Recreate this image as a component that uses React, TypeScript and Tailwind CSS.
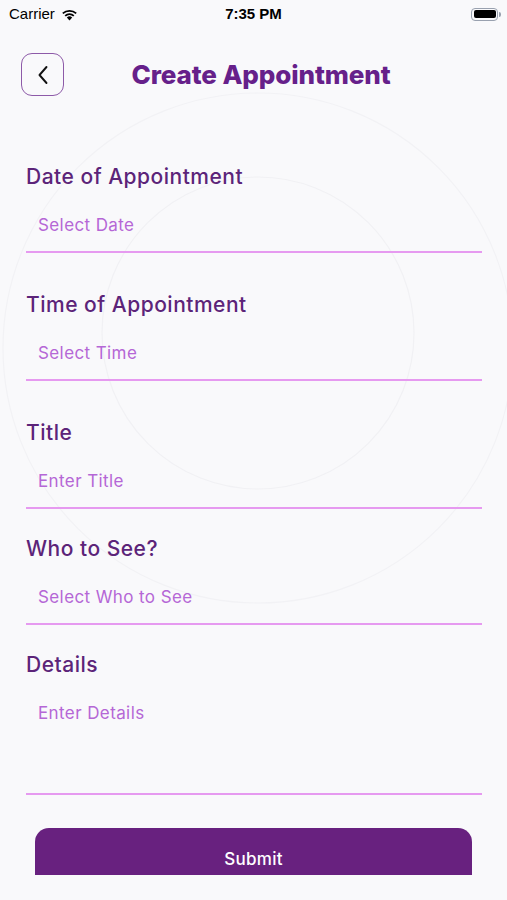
import { ChevronLeft } from "lucide-react";

const font = { fontFamily: "Inter, 'Noto Sans', sans-serif" };

type Field = {
  label: string;
  placeholder: string;
  gap: string;
  tall?: boolean;
};

const fields: Field[] = [
  { label: "Date of Appointment", placeholder: "Select Date", gap: "mt-[65px]" },
  { label: "Time of Appointment", placeholder: "Select Time", gap: "mt-[36px]" },
  { label: "Title", placeholder: "Enter Title", gap: "mt-[36px]" },
  { label: "Who to See?", placeholder: "Select Who to See", gap: "mt-[24px]" },
  { label: "Details", placeholder: "Enter Details", gap: "mt-[24px]", tall: true },
];

function StatusBar() {
  return (
    <div className="flex h-[28px] items-center justify-between pl-[9px] pr-[6px] text-[15px] text-black">
      <div className="flex items-center gap-[6px]">
        <span className="font-['Liberation_Sans',sans-serif]">Carrier</span>
        <svg width="17" height="13" viewBox="0 0 17 13">
          <path d="M8.5 12.5 L5.8 9.4 A4 4 0 0 1 11.2 9.4 Z" fill="#000" />
          <path d="M3.6 7.3 A7 7 0 0 1 13.4 7.3 L12.2 8.6 A5.3 5.3 0 0 0 4.8 8.6 Z" fill="#000" />
          <path d="M1.2 4.8 A10.6 10.6 0 0 1 15.8 4.8 L14.6 6.1 A8.9 8.9 0 0 0 2.4 6.1 Z" fill="#000" />
        </svg>
      </div>
      <span className="absolute left-1/2 -translate-x-1/2 font-['Liberation_Sans',sans-serif] font-semibold">
        7:35 PM
      </span>
      <div className="flex items-center">
        <div className="flex h-[13px] w-[27px] items-center rounded-[4px] border border-gray-400 p-[1.5px]">
          <div className="h-full w-full rounded-[2px] bg-black" />
        </div>
        <div className="ml-[1px] h-[5px] w-[2px] rounded-r-sm bg-gray-400" />
      </div>
    </div>
  );
}

export default function App() {
  return (
    <div className="relative h-[900px] w-[507px] overflow-hidden bg-[#f9f9fb]" style={font}>
      <svg
        className="pointer-events-none absolute left-0 top-0"
        width="507"
        height="900"
        viewBox="0 0 507 900"
      >
        <circle cx="258" cy="333" r="156" fill="none" stroke="#f1f1f4" strokeWidth="1.2" />
        <circle cx="258" cy="348" r="255" fill="none" stroke="#f2f2f5" strokeWidth="1.2" />
      </svg>

      <div className="relative">
        <StatusBar />

        <div className="mt-[25px] flex h-[43px] items-center pl-[21px] pr-[25px]">
          <button className="flex h-[43px] w-[43px] items-center justify-center rounded-[11px] border border-[#8d5aa8] text-black">
            <svg width="12" height="20" viewBox="0 0 12 20" fill="none">
              <path d="M9.5 2 L2.5 10 L9.5 18" stroke="#111" strokeWidth="1.9" strokeLinecap="round" strokeLinejoin="round" />
            </svg>
          </button>
          <h1 className="mr-[24px] flex-1 text-center text-[26px] font-extrabold tracking-[-0.1px] text-[#66208a]">
            Create Appointment
          </h1>
        </div>

        <div className="pl-[26px] pr-[25px]">
          {fields.map((f) => (
            <div key={f.label} className={f.gap}>
              <div className="flex h-[30px] items-center pt-[2px] text-[21px] font-medium tracking-[0.5px] text-[#5c2479]">
                {f.label}
              </div>
              <div
                className={`border-b-2 border-[#e69af0] pl-[12px] ${f.tall ? "pb-[67px]" : "pb-[13px]"}`}
              >
                <div className="mt-[23px] flex h-[24px] items-center text-[17px] tracking-[0.4px] text-[#b567d6]">
                  {f.placeholder}
                </div>
              </div>
            </div>
          ))}
        </div>

        <div className="mx-[35px] mt-[33px] h-[47px] overflow-hidden">
          <button className="flex h-[60px] w-full items-center justify-center rounded-[14px] bg-[#68217f] pt-[4px] text-[17px] font-medium tracking-[0.3px] text-white">
            Submit
          </button>
        </div>
      </div>
    </div>
  );
}
